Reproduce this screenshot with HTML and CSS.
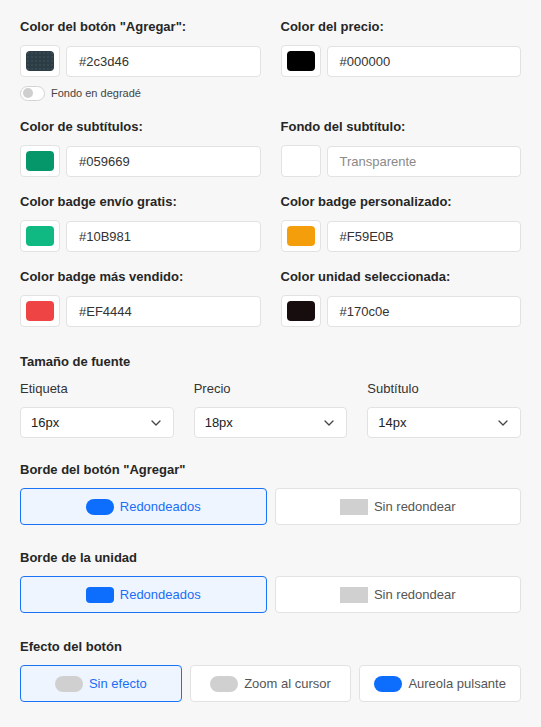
FILE: index.html
```html
<!DOCTYPE html>
<html lang="es">
<head>
    <meta charset="UTF-8">
    <meta name="viewport" content="width=device-width, initial-scale=1.0">
    <title>Ajustes de estilo</title>
    <link rel="stylesheet" href="styles.css">
</head>
<body>
    <div class="settings">
        <!-- colores -->
        <div class="color-grid">
            <div class="field">
                <label>Color del botón "Agregar":</label>
                <div class="color-row">
                    <div class="swatch"><span class="chip chip-dots" style="background-color:#2c3d46"></span></div>
                    <div class="text-input">#2c3d46</div>
                </div>
                <div class="toggle-row">
                    <span class="toggle"><span class="knob"></span></span>
                    <span class="toggle-label">Fondo en degradé</span>
                </div>
            </div>
            <div class="field">
                <label>Color del precio:</label>
                <div class="color-row">
                    <div class="swatch"><span class="chip" style="background-color:#000000"></span></div>
                    <div class="text-input">#000000</div>
                </div>
            </div>

            <div class="field">
                <label>Color de subtítulos:</label>
                <div class="color-row">
                    <div class="swatch"><span class="chip" style="background-color:#059669"></span></div>
                    <div class="text-input">#059669</div>
                </div>
            </div>
            <div class="field">
                <label>Fondo del subtítulo:</label>
                <div class="color-row">
                    <div class="swatch"><span class="chip" style="background-color:#ffffff"></span></div>
                    <div class="text-input placeholder">Transparente</div>
                </div>
            </div>

            <div class="field">
                <label>Color badge envío gratis:</label>
                <div class="color-row">
                    <div class="swatch"><span class="chip" style="background-color:#10B981"></span></div>
                    <div class="text-input">#10B981</div>
                </div>
            </div>
            <div class="field">
                <label>Color badge personalizado:</label>
                <div class="color-row">
                    <div class="swatch"><span class="chip" style="background-color:#F59E0B"></span></div>
                    <div class="text-input">#F59E0B</div>
                </div>
            </div>

            <div class="field">
                <label>Color badge más vendido:</label>
                <div class="color-row">
                    <div class="swatch"><span class="chip" style="background-color:#EF4444"></span></div>
                    <div class="text-input">#EF4444</div>
                </div>
            </div>
            <div class="field">
                <label>Color unidad seleccionada:</label>
                <div class="color-row">
                    <div class="swatch"><span class="chip" style="background-color:#170c0e"></span></div>
                    <div class="text-input">#170c0e</div>
                </div>
            </div>
        </div>

        <!-- tamaños -->
        <div class="section sizes">
            <h3>Tamaño de fuente</h3>
            <div class="size-grid">
                <div class="size-field">
                    <span class="sub-label">Etiqueta</span>
                    <div class="select">
                        <span>16px</span>
                        <svg width="10" height="6" viewBox="0 0 10 6"><path d="M1 1l4 4 4-4" fill="none" stroke="#444" stroke-width="1.3" stroke-linecap="round" stroke-linejoin="round"/></svg>
                    </div>
                </div>
                <div class="size-field">
                    <span class="sub-label">Precio</span>
                    <div class="select">
                        <span>18px</span>
                        <svg width="10" height="6" viewBox="0 0 10 6"><path d="M1 1l4 4 4-4" fill="none" stroke="#444" stroke-width="1.3" stroke-linecap="round" stroke-linejoin="round"/></svg>
                    </div>
                </div>
                <div class="size-field">
                    <span class="sub-label">Subtítulo</span>
                    <div class="select">
                        <span>14px</span>
                        <svg width="10" height="6" viewBox="0 0 10 6"><path d="M1 1l4 4 4-4" fill="none" stroke="#444" stroke-width="1.3" stroke-linecap="round" stroke-linejoin="round"/></svg>
                    </div>
                </div>
            </div>
        </div>

        <div class="section after-sizes">
            <h3>Borde del botón "Agregar"</h3>
            <div class="options">
                <div class="option active"><span class="shape pill blue"></span>Redondeados</div>
                <div class="option"><span class="shape square grey"></span>Sin redondear</div>
            </div>
        </div>

        <div class="section">
            <h3>Borde de la unidad</h3>
            <div class="options">
                <div class="option active"><span class="shape soft blue"></span>Redondeados</div>
                <div class="option"><span class="shape square grey"></span>Sin redondear</div>
            </div>
        </div>

        <div class="section last">
            <h3>Efecto del botón</h3>
            <div class="options three">
                <div class="option active"><span class="shape pill grey"></span>Sin efecto</div>
                <div class="option"><span class="shape pill grey"></span>Zoom al cursor</div>
                <div class="option"><span class="shape pill blue"></span>Aureola pulsante</div>
            </div>
        </div>
    </div>
</body>
</html>
```

FILE: styles.css
```css
body {
    margin: 0;
    padding: 18px 20px 20px;
    background-color: #f7f7f7;
    font-family: 'Liberation Sans', Arial, sans-serif;
    font-size: 13px;
    color: #222;
}
label, h3 {
    display: block;
    margin: 0 0 9px;
    font-size: 13px;
    line-height: 18px;
    font-weight: 700;
    color: #262626;
}
.color-grid {
    display: grid;
    grid-template-columns: 1fr 1fr;
    column-gap: 20px;
    row-gap: 16px;
}
.color-row {
    display: flex;
    align-items: flex-end;
    gap: 6px;
}
.swatch {
    box-sizing: border-box;
    width: 40px;
    height: 32px;
    padding: 5px;
    background-color: #fff;
    border: 1px solid #e2e2e2;
    border-radius: 4px;
    display: flex;
}
.chip {
    flex: 1;
    border-radius: 4px;
}
.chip-dots {
    background-image: radial-gradient(rgba(255,255,255,0.12) 0.6px, transparent 0.8px);
    background-size: 4px 4px;
}
.text-input {
    box-sizing: border-box;
    flex: 1;
    height: 31px;
    padding: 0 12px;
    display: flex;
    align-items: center;
    background-color: #fff;
    border: 1px solid #e2e2e2;
    border-radius: 4px;
    color: #333;
}
.text-input.placeholder {
    color: #8a8a8a;
}
.toggle-row {
    display: flex;
    align-items: center;
    gap: 6px;
    margin-top: 7px;
    height: 18px;
}
.toggle {
    box-sizing: border-box;
    width: 25px;
    height: 15px;
    padding: 2px;
    background-color: #fff;
    border: 1px solid #d4d4d4;
    border-radius: 8px;
    display: flex;
    align-items: center;
}
.knob {
    width: 10px;
    height: 10px;
    border-radius: 50%;
    background-color: #cfcfcf;
}
.toggle-label {
    font-size: 11px;
    color: #444;
}
.section {
    margin-top: 24px;
}
.section.sizes {
    margin-top: 26px;
}
.section.after-sizes {
    margin-top: 23px;
}
.section.last {
    margin-top: 25px;
}
.size-grid {
    display: grid;
    grid-template-columns: repeat(3, 1fr);
    column-gap: 20px;
}
.sub-label {
    display: block;
    margin-bottom: 9px;
    line-height: 18px;
    color: #333;
}
.select {
    box-sizing: border-box;
    height: 31px;
    padding: 0 12px 0 10px;
    display: flex;
    align-items: center;
    justify-content: space-between;
    background-color: #fff;
    border: 1px solid #e2e2e2;
    border-radius: 4px;
    color: #222;
}
.options {
    display: grid;
    grid-template-columns: 1fr 1fr;
    gap: 8px;
}
.options.three {
    grid-template-columns: repeat(3, 1fr);
}
.option {
    box-sizing: border-box;
    height: 37px;
    display: flex;
    align-items: center;
    justify-content: center;
    gap: 6px;
    background-color: #fff;
    border: 1px solid #e2e2e2;
    border-radius: 4px;
    color: #555;
}
.option.active {
    background-color: #eef5ff;
    border-color: #1a73f5;
    color: #1a6ef5;
}
.shape {
    width: 28px;
    height: 16px;
}
.shape.pill {
    border-radius: 8px;
}
.shape.soft {
    border-radius: 4px;
}
.shape.blue {
    background-color: #0d6efd;
}
.shape.grey {
    background-color: #d0d0d0;
}
```
